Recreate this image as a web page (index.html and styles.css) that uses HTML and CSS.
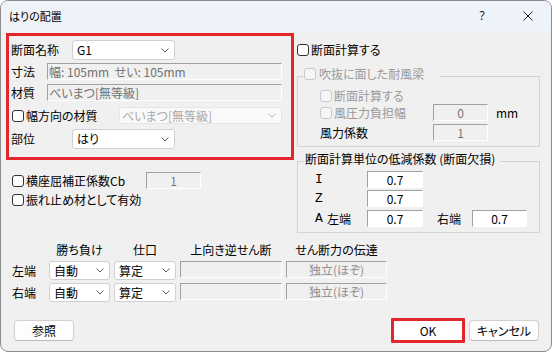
FILE: index.html
```html
<!DOCTYPE html>
<html lang="ja">
<head>
<meta charset="utf-8">
<title>はりの配置</title>
<link rel="stylesheet" href="styles.css">
</head>
<body>
<div class="dialog">
  <div class="titlebar">
    <span class="title">はりの配置</span>
    <span class="cap-btn help">?</span>
    <span class="cap-btn close"><svg width="10" height="10" viewBox="0 0 10 10"><path d="M0.5 0.5L9.5 9.5M9.5 0.5L0.5 9.5"/></svg></span>
  </div>
  <div class="content">
    <div class="top">
      <div class="left-col">
        <div class="highlight">
          <div class="row h20">
            <span class="lbl w61">断面名称</span>
            <div class="combo w103"><span>G1</span><svg class="chev" width="8" height="5" viewBox="0 0 8 5"><path d="M0.5 0.5L4 4L7.5 0.5"/></svg></div>
          </div>
          <div class="row h17 mt3">
            <span class="lbl w36">寸法</span>
            <div class="edit w235">幅: 105mm&nbsp; せい: 105mm</div>
          </div>
          <div class="row h17 mt4">
            <span class="lbl w36">材質</span>
            <div class="edit w235">べいまつ[無等級]</div>
          </div>
          <div class="row h17 mt6">
            <label class="chk-item w108"><span class="chk ml1"></span>幅方向の材質</label>
            <div class="combo dis w163"><span>べいまつ[無等級]</span><svg class="chev" width="8" height="5" viewBox="0 0 8 5"><path d="M0.5 0.5L4 4L7.5 0.5"/></svg></div>
          </div>
          <div class="row h20 mt5">
            <span class="lbl w61">部位</span>
            <div class="combo w103"><span>はり</span><svg class="chev" width="8" height="5" viewBox="0 0 8 5"><path d="M0.5 0.5L4 4L7.5 0.5"/></svg></div>
          </div>
        </div>
        <div class="row h17 mt12 ml6">
          <label class="chk-item w134"><span class="chk"></span>横座屈補正係数Cb</label>
          <div class="edit num w55">1</div>
        </div>
        <div class="row h14 mt4 ml6">
          <label class="chk-item"><span class="chk"></span>振れ止め材として有効</label>
        </div>
      </div>

      <div class="right-col">
        <div class="row h14 mt10">
          <label class="chk-item"><span class="chk"></span>断面計算する</label>
        </div>
        <div class="group g1">
          <div class="group-title gt1"><span class="chk dis"></span><span class="dis-text">吹抜に面した耐風梁</span></div>
          <div class="row h13 mt9 ml22">
            <label class="chk-item dis-text"><span class="chk dis"></span>断面計算する</label>
          </div>
          <div class="row h17 mt2 ml22">
            <label class="chk-item dis-text w113"><span class="chk dis"></span>風圧力負担幅</label>
            <div class="edit num w55">0</div>
            <span class="unit">mm</span>
          </div>
          <div class="row h17 mt3 ml22">
            <span class="lbl w113">風力係数</span>
            <div class="edit num w55">1</div>
          </div>
        </div>
        <div class="group g2">
          <div class="group-title gt2">断面計算単位の低減係数 (断面欠損)</div>
          <div class="row h17 mt5 ml17">
            <span class="lbl w52"><span class="mono">I</span></span>
            <div class="edit val w56">0.7</div>
          </div>
          <div class="row h17 mt2 ml17">
            <span class="lbl w52"><span class="mono">Z</span></span>
            <div class="edit val w56">0.7</div>
          </div>
          <div class="row h17 mt3 ml17">
            <span class="lbl w52"><span class="mono a">A</span>左端</span>
            <div class="edit val w56">0.7</div>
            <span class="lbl w35 ml14">右端</span>
            <div class="edit val w55">0.7</div>
          </div>
        </div>
      </div>
    </div>

    <div class="grid">
      <span></span>
      <span class="th">勝ち負け</span>
      <span class="th">仕口</span>
      <span class="th">上向き逆せん断</span>
      <span class="th">せん断力の伝達</span>

      <span class="rl">左端</span>
      <div class="combo tc"><span>自動</span><svg class="chev" width="8" height="5" viewBox="0 0 8 5"><path d="M0.5 0.5L4 4L7.5 0.5"/></svg></div>
      <div class="combo tc"><span>算定</span><svg class="chev" width="8" height="5" viewBox="0 0 8 5"><path d="M0.5 0.5L4 4L7.5 0.5"/></svg></div>
      <div class="edit cell"></div>
      <div class="edit num cell light">独立(ほぞ)</div>

      <span class="rl">右端</span>
      <div class="combo tc"><span>自動</span><svg class="chev" width="8" height="5" viewBox="0 0 8 5"><path d="M0.5 0.5L4 4L7.5 0.5"/></svg></div>
      <div class="combo tc"><span>算定</span><svg class="chev" width="8" height="5" viewBox="0 0 8 5"><path d="M0.5 0.5L4 4L7.5 0.5"/></svg></div>
      <div class="edit cell"></div>
      <div class="edit num cell light">独立(ほぞ)</div>
    </div>

    <div class="buttons">
      <button class="btn ref">参照</button>
      <span class="spacer"></span>
      <button class="btn ok">OK</button>
      <button class="btn cancel">キャンセル</button>
    </div>
  </div>
</div>
</body>
</html>
```

FILE: styles.css
```css
* { box-sizing: border-box; }
html, body { margin: 0; padding: 0; }
body {
  width: 552px;
  height: 353px;
  overflow: hidden;
  background: #ffffff;
  font-family: "Noto Sans CJK JP", "Noto Sans", sans-serif;
  font-size: 12px;
  line-height: 14px;
  color: #000;
  font-feature-settings: "palt";
}

.dialog {
  width: 552px;
  height: 352px;
  border: 1px solid #8c8c8c;
  border-radius: 8px;
  background: #f0f0f0;
  overflow: hidden;
  display: flex;
  flex-direction: column;
}

.titlebar {
  height: 30px;
  flex: none;
  background: #eef3f9;
  display: flex;
  align-items: center;
}
.title { flex: 1; padding-left: 8px; font-size: 11px; }
.cap-btn {
  width: 46px;
  height: 30px;
  display: flex;
  align-items: center;
  justify-content: center;
}
.help { font-family: "Noto Sans", sans-serif; font-size: 12px; color: #222; }
.close svg path { stroke: #222; stroke-width: 1; fill: none; }

.content { flex: 1; padding: 2px 12px 0 5px; }

.top { display: flex; height: 208px; }
.left-col { width: 288px; flex: none; }
.right-col { width: 243px; flex: none; margin-left: 3px; }

.highlight {
  border: 3px solid #e3262b;
  height: 127px;
  padding: 4px 0 0 2px;
}

.row { display: flex; align-items: center; }
.h13 { height: 13px; }
.h14 { height: 14px; }
.h17 { height: 17px; }
.h20 { height: 20px; }
.mt2 { margin-top: 2px; }
.mt3 { margin-top: 3px; }
.mt4 { margin-top: 4px; }
.mt5 { margin-top: 5px; }
.mt6 { margin-top: 6px; }
.mt9 { margin-top: 9px; }
.mt10 { margin-top: 10px; }
.mt12 { margin-top: 12px; }
.ml1 { margin-left: 1px; }
.ml6 { margin-left: 6px; }
.ml14 { margin-left: 14px; }
.ml17 { margin-left: 17px; }
.ml22 { margin-left: 22px; }

.w35 { width: 35px; }
.w36 { width: 36px; }
.w52 { width: 52px; }
.w55 { width: 55px; }
.w56 { width: 56px; }
.w61 { width: 61px; }
.w103 { width: 103px; }
.w108 { width: 108px; }
.w113 { width: 113px; }
.w134 { width: 134px; }
.w163 { width: 163px; }
.w235 { width: 235px; }

.lbl { flex: none; white-space: nowrap; display: flex; align-items: center; }
.mono { font-family: "Liberation Mono", monospace; font-size: 13px; }
.mono.a { width: 12px; }

.chk-item { display: flex; align-items: center; white-space: nowrap; flex: none; }
.chk {
  width: 12px;
  height: 12px;
  flex: none;
  border: 1px solid #333;
  border-radius: 3px;
  background: #fff;
  margin-right: 2px;
}
.chk.dis { border-color: #cacaca; background: #f6f6f6; }
.dis-text { color: #9a9a9a; }

.combo {
  height: 100%;
  flex: none;
  display: flex;
  align-items: center;
  justify-content: space-between;
  background: #fff;
  border: 1px solid #d0d0d0;
  border-radius: 3px;
  padding: 0 5px 0 4px;
  white-space: nowrap;
}
.combo.dis { background: #f9f9f9; border-color: #e6e6e6; color: #a8a8a8; padding-left: 2px; }
.chev { flex: none; }
.chev path { stroke: #5c5c5c; stroke-width: 1; fill: none; }
.combo.dis .chev path { stroke: #b8b8b8; }

.edit {
  height: 17px;
  flex: none;
  display: flex;
  align-items: center;
  background: #f0f0f0;
  border: 1px solid;
  border-color: #a0a0a0 #ffffff #ffffff #a0a0a0;
  color: #707070;
  padding-left: 1px;
  white-space: nowrap;
  overflow: hidden;
}
.edit.num { justify-content: center; padding: 0; color: #7a7a7a; }
.edit.val { justify-content: center; padding: 0; background: #fff; color: #000; }
.edit.light { color: #8e8e8e; }

.unit { margin-left: 8px; }

.group {
  border: 1px solid #d4d4d4;
  width: 243px;
}
.g1 { margin-top: 19px; height: 71px; }
.g2 { margin-top: 14px; height: 72px; }
.group-title {
  display: flex;
  align-items: center;
  width: fit-content;
  background: #f0f0f0;
  margin-left: 6px;
  white-space: nowrap;
}
.gt1 { height: 12px; margin-top: -9px; padding-right: 16px; }
.gt1 .chk { margin-right: 3px; }
.gt2 { height: 14px; margin-top: -10px; padding: 0 5px 0 1px; }

.grid {
  display: grid;
  grid-template-columns: 33px 61px 62px 102px 101px;
  grid-template-rows: 17px 19px 19px;
  column-gap: 4px;
  row-gap: 3px;
  margin-left: 6px;
}
.th { display: flex; align-items: center; justify-content: center; white-space: nowrap; }
.rl { display: flex; align-items: center; }
.combo.tc { height: 19px; }
.edit.cell { align-self: start; }

.buttons {
  display: flex;
  align-items: center;
  height: 25px;
  margin-top: 16px;
}
.spacer { flex: 1; }
.btn {
  font-family: inherit;
  font-size: 12px;
  font-feature-settings: "palt";
  line-height: 14px;
  color: #000;
  background: #fdfdfd;
  border: 1px solid #d0d0d0;
  border-bottom-color: #bdbdbd;
  border-radius: 4px;
  padding: 0;
  display: flex;
  align-items: center;
  justify-content: center;
}
.ref { margin-left: 8px; width: 60px; height: 21px; }
.ok { width: 74px; height: 25px; border: 3px solid #e3262b; border-radius: 1px; background: #fff; }
.cancel { margin-left: 4px; width: 70px; height: 21px; }
```
